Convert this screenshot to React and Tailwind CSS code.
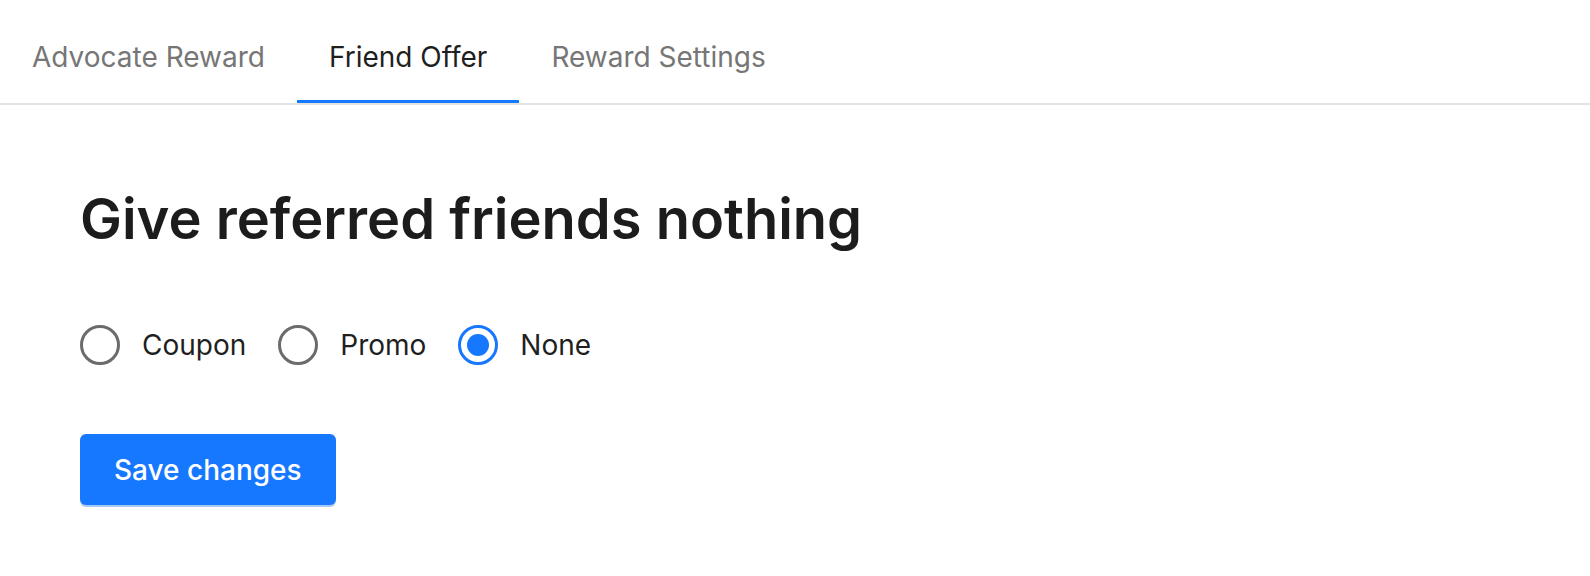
import React, { useState } from "react";

const tabs = ["Advocate Reward", "Friend Offer", "Reward Settings"];
const options = ["Coupon", "Promo", "None"];

function Radio({ label, checked, onSelect }) {
  return (
    <label className="flex items-center gap-[22px] cursor-pointer" onClick={onSelect}>
      <span
        className={
          checked
            ? "flex items-center justify-center w-[40px] h-[40px] rounded-full border-[3px] border-[#1677ff]"
            : "flex items-center justify-center w-[40px] h-[40px] rounded-full border-[3px] border-[#6b6b6b]"
        }
      >
        {checked && <span className="w-[22px] h-[22px] rounded-full bg-[#1677ff]" />}
      </span>
      <span className="text-[28px] leading-none text-[#1f1f1f]">{label}</span>
    </label>
  );
}

export default function App() {
  const [tab, setTab] = useState("Friend Offer");
  const [offer, setOffer] = useState("None");

  return (
    <div className="min-h-[576px] bg-white font-['Inter','Liberation_Sans',sans-serif]">
      {/* 탭 */}
      <div className="flex border-b-2 border-[#e3e3e3]">
        {tabs.map((t) => (
          <button
            key={t}
            onClick={() => setTab(t)}
            className={
              t === tab
                ? "relative h-[103px] px-[32px] pt-[10px] text-[28px] text-[#1f1f1f]"
                : "relative h-[103px] px-[32px] pt-[10px] text-[28px] text-[#767676]"
            }
          >
            {t}
            {t === tab && (
              <span className="absolute left-0 right-0 bottom-0 h-[3px] bg-[#1677ff]" />
            )}
          </button>
        ))}
      </div>

      {/* 내용 */}
      <div className="pl-[80px] pt-[81px]">
        <h1 className="text-[56px] leading-[67px] font-semibold text-[#1c1c1c]">
          Give referred friends nothing
        </h1>
        <div className="flex items-center gap-[32px] mt-[72px]">
          {options.map((o) => (
            <Radio key={o} label={o} checked={offer === o} onSelect={() => setOffer(o)} />
          ))}
        </div>
        <button className="mt-[69px] h-[71px] px-[34px] rounded-[6px] bg-[#1677ff] text-white text-[28px] font-medium shadow-[0_2px_0_rgba(5,100,220,0.35)]">
          Save changes
        </button>
      </div>
    </div>
  );
}
